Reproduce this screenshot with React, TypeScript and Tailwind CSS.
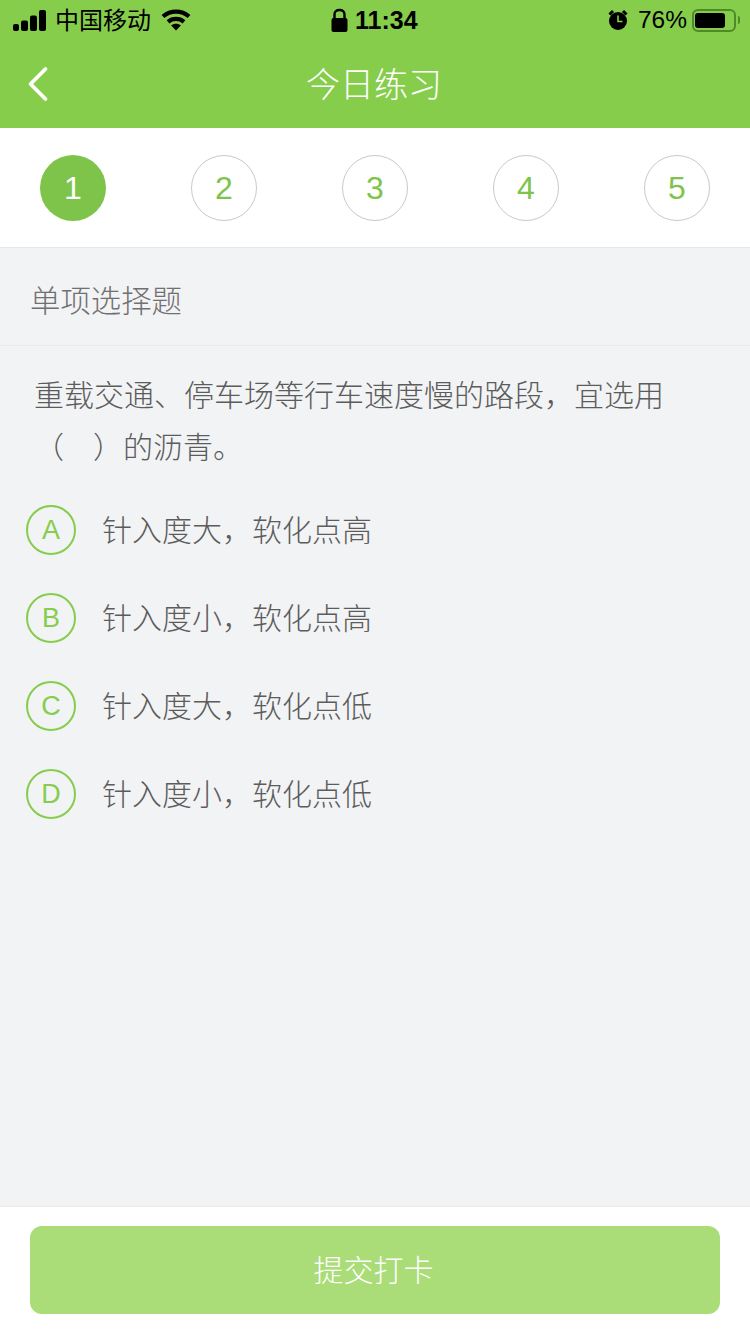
import { ChevronLeft } from "lucide-react";

const steps = ["1", "2", "3", "4", "5"];

const options = [
  { key: "A", label: "针入度大，软化点高" },
  { key: "B", label: "针入度小，软化点高" },
  { key: "C", label: "针入度大，软化点低" },
  { key: "D", label: "针入度小，软化点低" },
];

const fontStack = "font-['Liberation_Sans','Noto_Sans_CJK_SC',sans-serif]";

function StatusBar() {
  return (
    <div className="relative flex h-[40px] items-center justify-between pl-[13px] pr-[10px] text-black">
      <div className="flex items-center">
        <svg width="34" height="21" viewBox="0 0 34 21" fill="#000">
          <rect x="0" y="14" width="6" height="7" rx="2" />
          <rect x="8" y="10.5" width="7" height="10.5" rx="2" />
          <rect x="17" y="5.5" width="7" height="15.5" rx="2" />
          <rect x="26" y="0" width="7" height="21" rx="2" />
        </svg>
        <span className="ml-[8px] pt-[1px] text-[24px] leading-[30px]">中国移动</span>
        <svg className="ml-[10px]" width="30" height="22" viewBox="0 0 30 22" fill="none" stroke="#000" strokeWidth="4.2">
          <path d="M2 7.5C9.5 1 20.5 1 28 7.5" />
          <path d="M7 12.8C11.5 8.9 18.5 8.9 23 12.8" />
          <path d="M15 21.5l-5-5.2c2.8-2.2 7.2-2.2 10 0z" fill="#000" stroke="none" />
        </svg>
      </div>
      <div className="absolute left-[331px] top-[5px] flex items-center">
        <svg width="17" height="25" viewBox="0 0 17 25" fill="none">
          <path d="M3.5 11V6.5C3.5 3.5 5.5 2 8.5 2s5 1.5 5 4.5V11" stroke="#000" strokeWidth="2.4" />
          <rect x="0.5" y="10" width="16" height="14" rx="2" fill="#000" />
        </svg>
        <span className="ml-[7px] text-[25px] font-bold leading-[30px]">11:34</span>
      </div>
      <div className="flex items-center">
        <svg width="20" height="22" viewBox="0 0 20 22" fill="none">
          <circle cx="10" cy="12" r="9" fill="#000" />
          <path d="M10 6.5V12.5H14.5" stroke="#86cd4c" strokeWidth="1.6" />
          <path d="M1.5 5.5L5 2M18.5 5.5L15 2" stroke="#000" strokeWidth="3" />
        </svg>
        <span className="ml-[10px] text-[24.5px] leading-[30px]">76%</span>
        <div className="ml-[5px] flex items-center">
          <div className="flex h-[23px] w-[44px] items-center rounded-[6px] border-2 border-[#4f8a2a] py-[2px] pl-[0.5px]">
            <div className="h-full w-[30px] rounded-[3px] bg-black" />
          </div>
          <div className="ml-[2px] h-[8px] w-[2px] rounded-r-full bg-[#4f8a2a]" />
        </div>
      </div>
    </div>
  );
}

export default function App() {
  return (
    <div className={`flex h-[1334px] w-[750px] flex-col overflow-hidden bg-[#f2f3f5] ${fontStack}`}>
      <header className="h-[128px] bg-[#86cd4c]">
        <StatusBar />
        <div className="relative flex h-[88px] items-center justify-center">
          <ChevronLeft className="absolute left-[8px] top-[14px] text-white" size={60} strokeWidth={1.5} />
          <h1 className="pr-[2px] pt-[2px] text-[34px] font-light leading-[34px] text-white">今日练习</h1>
        </div>
      </header>

      <div className="flex h-[120px] items-start justify-between border-b border-[#e8e8e8] bg-white px-[40px] pt-[27px]">
        {steps.map((step, i) => (
          <div
            key={step}
            className={
              i === 0
                ? "flex h-[66px] w-[66px] items-center justify-center rounded-full bg-[#7ec44a] text-[32px] font-light text-white"
                : "flex h-[66px] w-[66px] items-center justify-center rounded-full border border-[#c9c9c9] text-[32px] font-light text-[#7ec44a]"
            }
          >
            {step}
          </div>
        ))}
      </div>

      <div className="flex h-[98px] items-center border-b border-[#e9eaec] pl-[30px] pt-[10px] text-[30.4px] font-light text-[#707070]">
        单项选择题
      </div>

      <p className="px-[34px] pt-[24px] text-[30px] font-light leading-[52px] text-[#5c5c5c]">
        重载交通、停车场等行车速度慢的路段，宜选用
        <br />
        （<span className="inline-block w-[29px]" />）的沥青。
      </p>

      <ul className="mt-[31px] flex flex-col gap-[38px] pl-[26px]">
        {options.map((option) => (
          <li key={option.key} className="flex items-center">
            <span className="flex h-[50px] w-[50px] items-center justify-center rounded-full border-2 border-[#86cd4c] pt-[1px] text-[27px] font-light text-[#86cd4c]">
              {option.key}
            </span>
            <span className="ml-[26px] text-[30px] font-light text-[#5c5c5c]">{option.label}</span>
          </li>
        ))}
      </ul>

      <div className="mt-auto flex h-[128px] border-t border-[#e8e8e8] bg-white px-[30px] pt-[19px]">
        <button className="flex h-[88px] w-full items-center justify-center rounded-[12px] bg-[#aadc78] pr-[3px] text-[30px] font-light text-white">
          提交打卡
        </button>
      </div>
    </div>
  );
}
